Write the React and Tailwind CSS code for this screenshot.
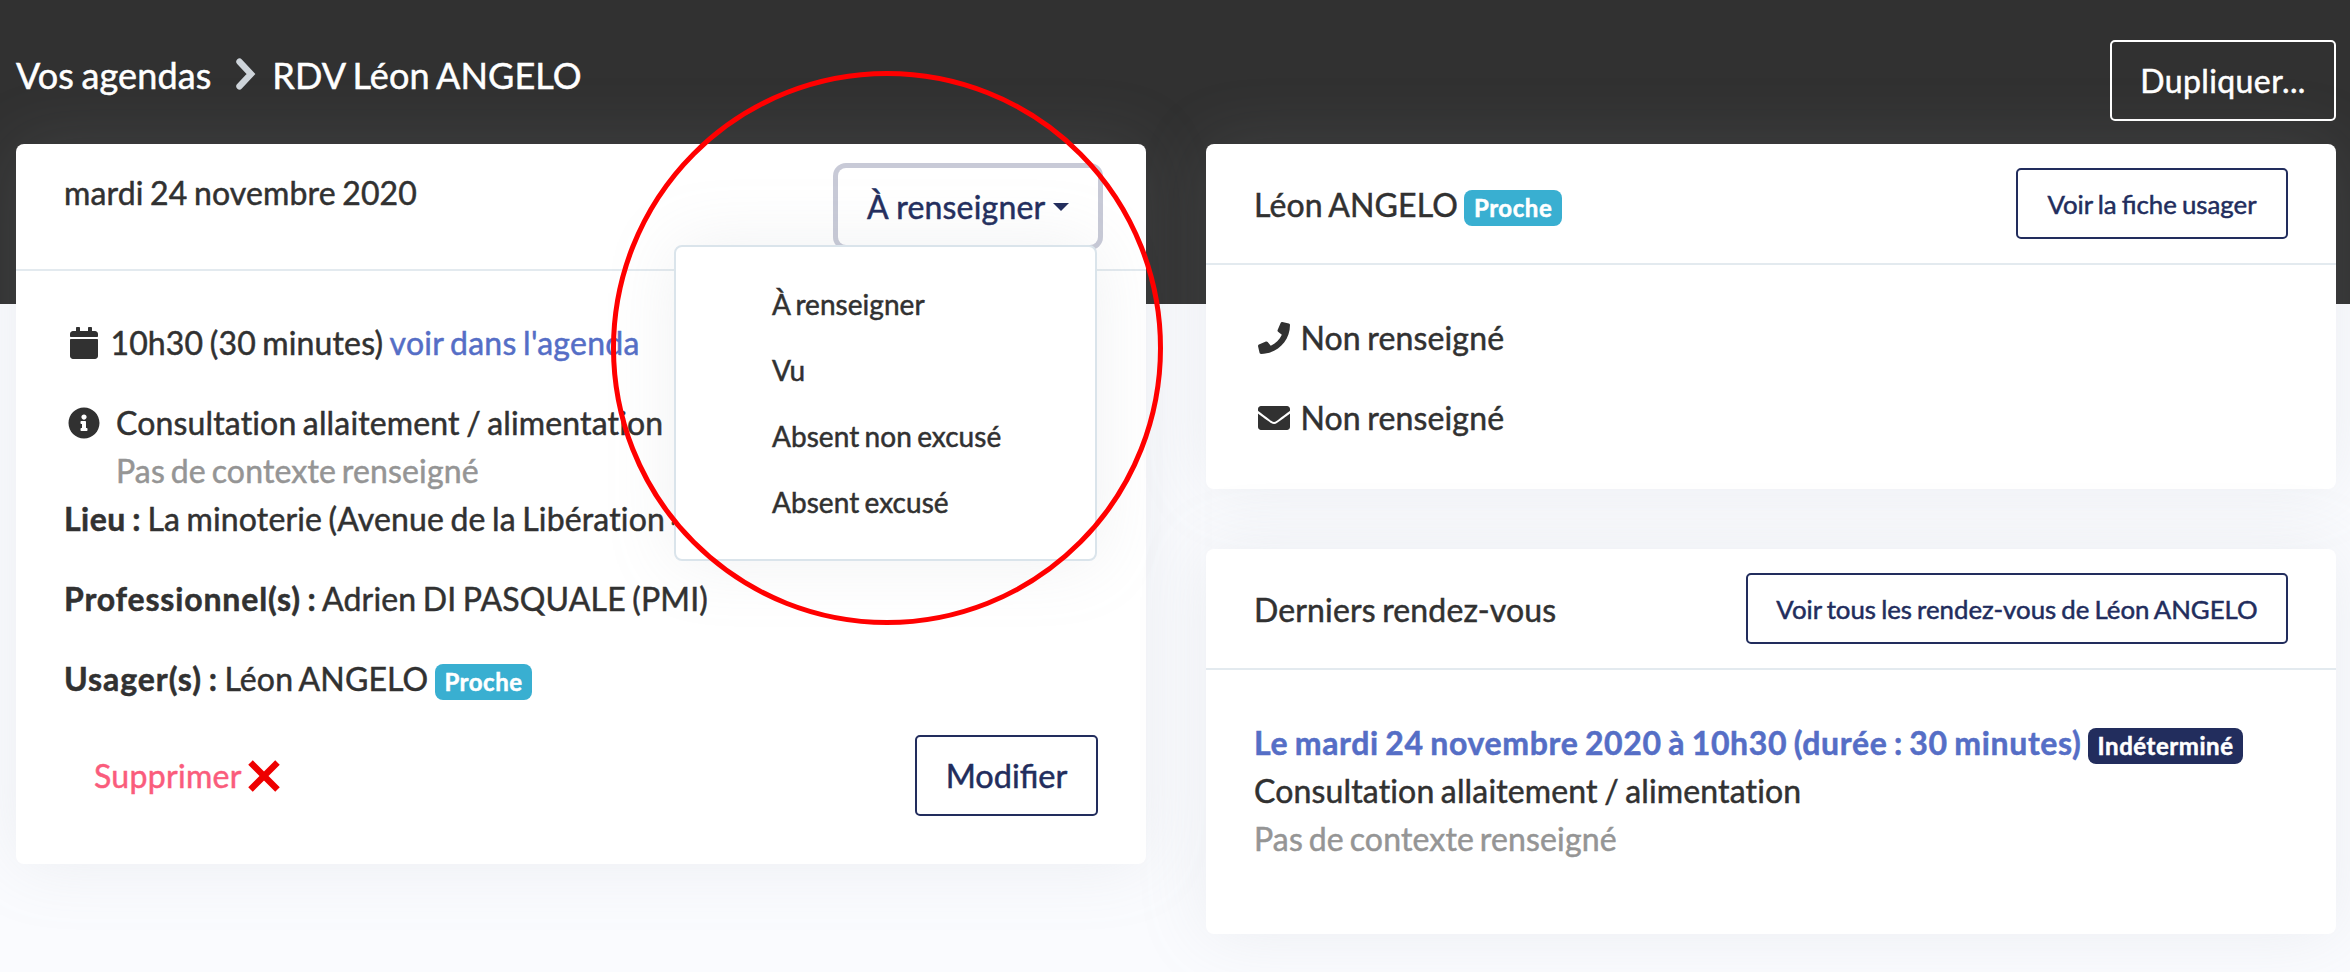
import React from "react";
import { FaCalendar, FaInfoCircle, FaPhone, FaEnvelope } from "react-icons/fa";

function Card({ className = "", children }) {
  return (
    <section className={"rounded-lg bg-white shadow-[0_0_70px_rgba(154,161,171,0.15)] " + className}>
      {children}
    </section>
  );
}

function CardHeader({ className = "", children }) {
  return (
    <div className={"flex items-start justify-between border-b-2 border-[#e3eaef] px-12 pt-6 " + className}>
      {children}
    </div>
  );
}

function Badge({ color, children }) {
  return (
    <span className={"inline-block rounded-lg px-[9.6px] py-1.5 text-2xl leading-none font-bold tracking-[0.55px] text-white " + color}>
      {children}
    </span>
  );
}

function Button({ className = "", children }) {
  return (
    <button className={"shrink-0 rounded-[5px] border-2 whitespace-nowrap [word-spacing:-1.5px] " + className}>
      {children}
    </button>
  );
}

function Icon({ as: Glyph }) {
  return (
    <span className="inline-flex w-10 shrink-0 justify-center align-[-4px]">
      <Glyph className="size-8" />
    </span>
  );
}

const statuses = ["À renseigner", "Vu", "Absent non excusé", "Absent excusé"];

function StatusDropdown() {
  return (
    <div className="relative">
      <button className="flex h-[77px] w-[260px] items-center justify-between rounded-lg border-2 border-transparent pr-[27px] pl-[27px] whitespace-nowrap text-[#222d5d] shadow-[0_0_0_5px_#c8cad7]">
        <span className="tracking-[0.2px]">À renseigner</span>
        <svg className="h-2 w-4" viewBox="0 0 16 8" fill="currentColor">
          <path d="M0 0h16L8 8z" />
        </svg>
      </button>
      <ul className="absolute top-[77px] right-px z-10 w-[423px] rounded-lg border-2 border-[#dae4eb] bg-white py-6 text-[28px] leading-[42px] tracking-[0.05px] shadow-[0_0_70px_rgba(154,161,171,0.15)]">
        {statuses.map((s) => (
          <li key={s} className="px-24 py-3 whitespace-nowrap">
            {s}
          </li>
        ))}
      </ul>
    </div>
  );
}

export default function App() {
  return (
    <div className="relative h-[972px] w-[2350px] overflow-hidden bg-[linear-gradient(#313131_304px,#fafbfe_304px)] px-4 font-[Lato,sans-serif] text-[32px] leading-[48px] tracking-[0.15px] text-[#313131] [-webkit-text-stroke:0.5px] [word-spacing:-1.9px]">
      <header className="flex h-36 items-start justify-between text-white">
        <nav className="flex items-center pt-12 text-4xl leading-[54px] tracking-[0.1px] [word-spacing:-1.7px]">
          <span>Vos agendas</span>
          <svg className="mr-4 mb-0.5 ml-[25px] h-8 w-5" viewBox="0 0 20 32" fill="none" stroke="#ced4da" strokeWidth="6.4" strokeLinecap="round" strokeLinejoin="miter">
            <path d="M3.5 3.7 15 16 3.5 28.3" />
          </svg>
          <span>RDV Léon ANGELO</span>
        </nav>
        <Button className="mt-10 -mr-0.5 h-[81px] w-[226px] border-white tracking-[0.4px]">Dupliquer...</Button>
      </header>

      <main className="grid w-[2320px] grid-cols-2 items-start gap-[60px]">
        <Card className="h-[720px]">
          <CardHeader className="h-[127px]">
            <h2 className="pt-px">mardi 24 novembre 2020</h2>
            <StatusDropdown />
          </CardHeader>
          <div className="flex flex-col px-12 pt-12 whitespace-nowrap">
            <p className="mb-8">
              <Icon as={FaCalendar} /> 10h30 (30 minutes) <a className="tracking-[0.25px] text-[#556ec6]">voir dans l'agenda</a>
            </p>
            <div className="flex gap-3">
              <span>
                <Icon as={FaInfoCircle} />
              </span>
              <div>
                <p>Consultation allaitement / alimentation</p>
                <p className="text-[#959595] [word-spacing:-2.5px]">Pas de contexte renseigné</p>
              </div>
            </div>
            <p className="mb-8">
              <b className="tracking-[0.5px]">Lieu :</b> La minoterie (Avenue de la Libération 4
            </p>
            <p className="mb-8">
              <b className="tracking-[0.85px]">Professionnel(s) :</b> Adrien DI PASQUALE (PMI)
            </p>
            <p className="mb-8">
              <b className="tracking-[0.95px]">Usager(s) :</b> Léon ANGELO <Badge color="bg-[#39afd1]">Proche</Badge>
            </p>
            <div className="flex justify-between">
              <button className="flex h-[81px] items-center gap-1.5 pl-[30px] tracking-[0.3px] text-[#fa5c7c]">
                Supprimer
                <svg className="size-8" viewBox="0 0 32 32" stroke="#ee0000" strokeWidth="6.4">
                  <path d="M2.5 2.5l27 27M29.5 2.5l-27 27" />
                </svg>
              </button>
              <Button className="h-[81px] w-[183px] border-[#222d5d] text-[32.5px] tracking-[0px] text-[#222d5d]">Modifier</Button>
            </div>
          </div>
        </Card>

        <div className="flex flex-col gap-[60px]">
          <Card className="h-[345px]">
            <CardHeader className="h-[121px]">
              <h2 className="pt-[13px]">
                Léon ANGELO <Badge color="bg-[#39afd1]">Proche</Badge>
              </h2>
              <Button className="h-[71px] w-[272px] border-[#222d5d] text-[25.8px] tracking-[0px] text-[#222d5d]">
                Voir la fiche usager
              </Button>
            </CardHeader>
            <div className="flex flex-col gap-8 px-12 pt-[49px]">
              <p>
                <Icon as={FaPhone} /> Non renseigné
              </p>
              <p>
                <Icon as={FaEnvelope} /> Non renseigné
              </p>
            </div>
          </Card>

          <Card className="h-[385px]">
            <CardHeader className="h-[121px]">
              <h2 className="pt-[13px]">Derniers rendez-vous</h2>
              <Button className="h-[71px] w-[542px] border-[#222d5d] text-[25.8px] tracking-[0px] text-[#222d5d]">
                Voir tous les rendez-vous de Léon ANGELO
              </Button>
            </CardHeader>
            <div className="px-12 pt-[49px] whitespace-nowrap">
              <p>
                <a className="font-bold tracking-[0.65px] text-[#556ec6]">Le mardi 24 novembre 2020 à 10h30 (durée : 30 minutes)</a>{" "}
                <Badge color="bg-[#222d5d]">Indéterminé</Badge>
              </p>
              <p>Consultation allaitement / alimentation</p>
              <p className="text-[#959595] [word-spacing:-2.5px]">Pas de contexte renseigné</p>
            </div>
          </Card>
        </div>
      </main>

      <svg className="absolute top-[70px] left-[610px] z-20 h-[556px] w-[554px]" viewBox="0 0 554 556" fill="none" stroke="#ff0000" strokeWidth="5">
        <ellipse cx="277" cy="278" rx="273.5" ry="274.5" />
      </svg>
    </div>
  );
}
